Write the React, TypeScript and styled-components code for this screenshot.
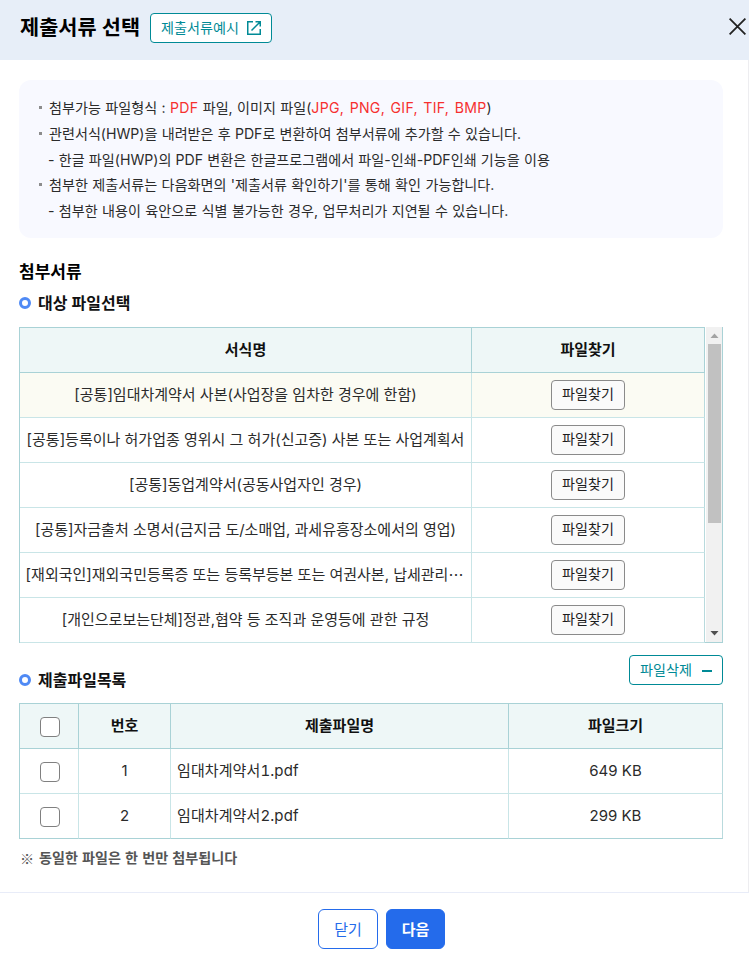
import React from "react";
import styled, { createGlobalStyle } from "styled-components";

const GlobalStyle = createGlobalStyle`
  *, *::before, *::after { box-sizing: border-box; }
  body { margin: 0; background: #fff; }
  body, button, input {
    font-family: Inter, "Noto Sans CJK KR", sans-serif;
  }
`;

const Dialog = styled.div`
  display: flex;
  flex-direction: column;
  width: 749px;
  height: 958px;
  overflow: hidden;
  color: #2b2b2b;
`;

const Header = styled.header`
  display: flex;
  align-items: center;
  height: 60px;
  padding: 0 3px 5px 20px;
  background: #e7eef8;
  flex: none;
`;

const Title = styled.h1`
  margin: 0;
  width: 130px;
  padding-bottom: 1px;
  font-size: 20.8px;
  line-height: 29px;
  font-weight: 600;
  color: #000;
  white-space: nowrap;
`;

const Button = styled.button<{ $width: number }>`
  display: flex;
  align-items: center;
  justify-content: center;
  width: ${(p) => p.$width}px;
  height: 30px;
  padding: 0 0 2px;
  border: 1px solid #8a8a8a;
  border-radius: 4px;
  background: #fafafa;
  color: #1d1d1d;
  font-size: 14.1px;
  line-height: 20px;
  white-space: nowrap;
`;

const TealButton = styled(Button)<{ $gap: number }>`
  gap: ${(p) => p.$gap}px;
  padding: 0;
  border-color: #008a96;
  background: #fff;
  color: #008a96;
`;

const CloseButton = styled.button`
  display: flex;
  margin-left: auto;
  padding: 0 0 2px;
  border: 0;
  background: none;
`;

const Main = styled.main`
  flex: 1;
  padding: 20px 25px 0 19px;
  border-right: 1px solid #ededf0;
`;

const Notice = styled.ul`
  margin: 0;
  width: 704px;
  height: 158px;
  padding: 15px 20px 0;
  list-style: none;
  border-radius: 12px;
  background: #f8f9ff;
`;

const NoticeLine = styled.li<{ $bullet?: boolean; $wordGap?: number }>`
  display: flex;
  height: 25.8px;
  font-size: 14.1px;
  line-height: 26px;
  white-space: pre;
  word-spacing: ${(p) => p.$wordGap ?? 0.25}px;

  &::before {
    content: "";
    flex: none;
    width: 3px;
    height: 3px;
    margin: 11px ${(p) => (p.$bullet ? 7 : 6)}px 0 0;
    background: ${(p) => (p.$bullet ? "#8c8c8c" : "transparent")};
  }
`;

const Red = styled.em`
  font-style: normal;
  letter-spacing: 0.3px;
  word-spacing: 1.2px;
  color: #f6302f;
`;

const SectionTitle = styled.h2`
  margin: 22px 0 0;
  font-size: 17px;
  line-height: 25px;
  font-weight: 600;
  color: #000;
`;

const SubTitle = styled.h3`
  display: flex;
  align-items: center;
  margin: 0;
  font-size: 16px;
  line-height: 24px;
  font-weight: 600;
  color: #111;

  &::before {
    content: "";
    width: 12px;
    height: 12px;
    margin-right: 7px;
    border: 3.5px solid #4f8af5;
    border-radius: 50%;
  }
`;

const TargetHeading = styled.div`
  margin: 6px 0 12px;
`;

const ListHeading = styled.div`
  display: flex;
  justify-content: space-between;
  width: 704px;
  height: 60px;
  padding-top: 12px;

  ${SubTitle} { height: 24px; margin-top: 13px; }
`;

const ScrollFrame = styled.div`
  display: flex;
  width: 704px;
  height: 316px;
  border: solid #a9d2d6;
  border-width: 0 1px 1px 0;
`;

const Grid = styled.div<{ $columns: string; $width: number }>`
  width: ${(p) => p.$width}px;
  border-top: 1px solid #a9d2d6;
  border-left: 1px solid #a9d2d6;

  > div {
    display: grid;
    grid-template-columns: ${(p) => p.$columns};
    height: 45px;
  }
`;

const HeadRow = styled.div`
  background: #eef7f7;
  font-weight: 600;
  color: #111;

  > * { border-color: #a9d2d6; }
`;

const Row = styled.div<{ $selected?: boolean; $last?: boolean }>`
  background: ${(p) => (p.$selected ? "#fbfbf3" : "#fff")};

  > * {
    border-color: #c9e5e7;
    border-bottom-color: ${(p) => (p.$last ? "#a9d2d6" : "#c9e5e7")};
  }
  > *:last-child { border-right-color: #b9dadd; }
`;

const Cell = styled.div<{ $left?: boolean }>`
  display: flex;
  align-items: center;
  justify-content: ${(p) => (p.$left ? "flex-start" : "center")};
  min-width: 0;
  padding-left: ${(p) => (p.$left ? 6 : 0)}px;
  border-style: solid;
  border-width: 0 1px 1px 0;
  font-size: 15px;
  line-height: 22px;
  font-variant-numeric: ${(p) => (p.$left ? "tabular-nums" : "normal")};
  letter-spacing: ${(p) => (p.$left ? 0.1 : 0)}px;
  white-space: nowrap;
`;

const Ellipsis = styled.span`
  margin-right: 2px;
  font-family: "Noto Sans CJK KR", sans-serif;
`;

const Scrollbar = styled.div`
  display: flex;
  flex-direction: column;
  align-items: center;
  width: 16px;
  margin-left: 1px;
  height: 315px;
  background: #f1f1f1;
`;

const Arrow = styled.svg`
  width: 16px;
  height: 17px;
  flex: none;
`;

const Thumb = styled.div`
  width: 13px;
  height: 179px;
  margin-bottom: auto;
  background: #c1c1c1;
`;

const Checkbox = styled.input.attrs({ type: "checkbox" })`
  appearance: none;
  width: 20px;
  height: 20px;
  margin: 2px 0 0 2px;
  border: 1px solid #808080;
  border-radius: 4px;
  background: #fff;
`;

const Note = styled.p`
  display: flex;
  margin: 8px 0 0 1px;
  font-size: 14.1px;
  line-height: 22px;
  font-weight: 600;
  word-spacing: 0.6px;
  color: #555;
`;

const NoteMark = styled.span`
  width: 19px;
  font-family: "Noto Sans CJK KR", sans-serif;
`;

const Footer = styled.footer`
  display: flex;
  justify-content: center;
  gap: 8px;
  height: 66px;
  padding: 16px 0 0 14px;
  border-top: 1px solid #e8ecf8;
  flex: none;
`;

const FooterButton = styled.button<{ $primary?: boolean }>`
  width: ${(p) => (p.$primary ? 59 : 60)}px;
  height: 40px;
  padding: 0 0 2px;
  border: 1px solid #246beb;
  border-radius: 6px;
  background: ${(p) => (p.$primary ? "#246beb" : "#fff")};
  color: ${(p) => (p.$primary ? "#fff" : "#246beb")};
  font-size: 15px;
  font-weight: ${(p) => (p.$primary ? 600 : 400)};
`;

const forms: { name: string; clipped?: boolean }[] = [
  { name: "[공통]임대차계약서 사본(사업장을 임차한 경우에 한함)" },
  { name: "[공통]등록이나 허가업종 영위시 그 허가(신고증) 사본 또는 사업계획서" },
  { name: "[공통]동업계약서(공동사업자인 경우)" },
  { name: "[공통]자금출처 소명서(금지금 도/소매업, 과세유흥장소에서의 영업)" },
  { name: "[재외국인]재외국민등록증 또는 등록부등본 또는 여권사본, 납세관리", clipped: true },
  { name: "[개인으로보는단체]정관,협약 등 조직과 운영등에 관한 규정" },
];

const files = [
  { no: 1, name: "임대차계약서1.pdf", size: "649 KB" },
  { no: 2, name: "임대차계약서2.pdf", size: "299 KB" },
];

export default function App() {
  return (
    <>
      <GlobalStyle />
      <Dialog>
        <Header>
          <Title>제출서류 선택</Title>
          <TealButton $width={122} $gap={8}>
            제출서류예시
            <svg width="14" height="14" viewBox="0 0 14 14" fill="none" stroke="currentColor" strokeWidth="1.5">
              <path d="M6 .75H.75v12.5h12.5V8M8.5.75h4.75V5.5M13 1 4.5 9.5" />
            </svg>
          </TealButton>
          <CloseButton aria-label="닫기">
            <svg width="17" height="17" viewBox="0 0 17 17" stroke="#222" strokeWidth="1.8">
              <path d="m.6.6 15.8 15.8M16.4.6.6 16.4" />
            </svg>
          </CloseButton>
        </Header>

        <Main>
          <Notice>
            <NoticeLine $bullet $wordGap={0.4}>
              첨부가능 파일형식 : <Red>PDF</Red> 파일, 이미지 파일(<Red>JPG, PNG, GIF, TIF, BMP</Red>)
            </NoticeLine>
            <NoticeLine $bullet>관련서식(HWP)을 내려받은 후 PDF로 변환하여 첨부서류에 추가할 수 있습니다.</NoticeLine>
            <NoticeLine>- 한글 파일(HWP)의 PDF 변환은 한글프로그램에서 파일-인쇄-PDF인쇄 기능을 이용</NoticeLine>
            <NoticeLine $bullet $wordGap={0.45}>첨부한 제출서류는 다음화면의 '제출서류 확인하기'를 통해 확인 가능합니다.</NoticeLine>
            <NoticeLine $wordGap={0.4}>- 첨부한 내용이 육안으로 식별 불가능한 경우, 업무처리가 지연될 수 있습니다.</NoticeLine>
          </Notice>

          <SectionTitle>첨부서류</SectionTitle>
          <TargetHeading>
            <SubTitle>대상 파일선택</SubTitle>
          </TargetHeading>

          <ScrollFrame>
            <Grid $columns="452px 233px" $width={686}>
              <HeadRow>
                <Cell>서식명</Cell>
                <Cell>파일찾기</Cell>
              </HeadRow>
              {forms.map((form, i) => (
                <Row key={form.name} $selected={i === 0}>
                  <Cell>
                    {form.name}
                    {form.clipped && <Ellipsis>…</Ellipsis>}
                  </Cell>
                  <Cell>
                    <Button $width={74}>파일찾기</Button>
                  </Cell>
                </Row>
              ))}
            </Grid>
            <Scrollbar>
              <Arrow viewBox="0 0 16 17"><path d="M4.5 11h8l-4-4.5z" fill="#a3a3a3" /></Arrow>
              <Thumb />
              <Arrow viewBox="0 0 16 17"><path d="M4.5 6h8l-4 4.5z" fill="#505050" /></Arrow>
            </Scrollbar>
          </ScrollFrame>

          <ListHeading>
            <SubTitle>제출파일목록</SubTitle>
            <TealButton $width={94} $gap={10}>
              파일삭제
              <svg width="10" height="12" viewBox="0 0 10 12" fill="currentColor">
                <path d="M0 6h10v2H0z" />
              </svg>
            </TealButton>
          </ListHeading>

          <Grid $columns="59px 92px 338px 214px" $width={704}>
            <HeadRow>
              <Cell><Checkbox aria-label="전체 선택" /></Cell>
              <Cell>번호</Cell>
              <Cell>제출파일명</Cell>
              <Cell>파일크기</Cell>
            </HeadRow>
            {files.map((file, i) => (
              <Row key={file.no} $last={i === files.length - 1}>
                <Cell><Checkbox aria-label={file.name} /></Cell>
                <Cell>{file.no}</Cell>
                <Cell $left>{file.name}</Cell>
                <Cell>{file.size}</Cell>
              </Row>
            ))}
          </Grid>
          <Note><NoteMark>※</NoteMark>동일한 파일은 한 번만 첨부됩니다</Note>
        </Main>

        <Footer>
          <FooterButton>닫기</FooterButton>
          <FooterButton $primary>다음</FooterButton>
        </Footer>
      </Dialog>
    </>
  );
}
